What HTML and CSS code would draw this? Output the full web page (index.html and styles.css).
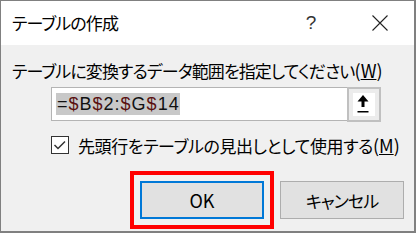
FILE: index.html
```html
<!DOCTYPE html>
<html lang="ja">
<head>
<meta charset="utf-8">
<title>テーブルの作成</title>
<link rel="stylesheet" href="styles.css">
</head>
<body>
<div class="window">
  <div class="titlebar">
    <span class="title jp">テーブルの作成</span>
    <span class="help">?</span>
    <span class="close"><svg width="16" height="16" viewBox="0 0 16 16"><path d="M0.5 0.5 L15.5 15.5 M15.5 0.5 L0.5 15.5" stroke="#222" stroke-width="1.1" fill="none"/></svg></span>
  </div>
  <div class="content">
    <div class="label jp">テーブルに変換するデータ範囲を指定してください<span class="latin">(<u>W</u>)</span></div>
    <div class="range-row">
      <div class="range-input"><span class="sel">=<span class="d">$</span>B<span class="d">$</span>2:<span class="d">$</span>G<span class="d">$</span>14</span></div>
      <div class="collapse-btn"><div class="collapse-inner"><svg width="22" height="23" viewBox="0 0 22 23"><path d="M10 2 L15.5 8.5 L4.5 8.5 Z" fill="#000"/><rect x="8.5" y="8" width="3" height="6" fill="#000"/><rect x="4.5" y="18" width="11" height="1.5" fill="#000"/></svg></div></div>
    </div>
    <div class="check-row">
      <span class="checkbox"><svg width="16" height="16" viewBox="0 0 16 16"><path d="M2.5 8 L6 11.5 L13 4.5" stroke="#333" stroke-width="1.5" fill="none"/></svg></span>
      <span class="check-label jp">先頭行をテーブルの見出しとして使用する<span class="latin">(<u>M</u>)</span></span>
    </div>
    <div class="buttons">
      <div class="btn ok">OK<span class="highlight"></span></div>
      <div class="btn jp">キャンセル</div>
    </div>
  </div>
</div>
</body>
</html>
```

FILE: styles.css
```css
html, body {
  margin: 0;
  padding: 0;
}
body {
  width: 416px;
  height: 233px;
  overflow: hidden;
  font-family: "Noto Sans CJK JP", "Noto Sans", sans-serif;
  color: #000;
}
.jp {
  font-size: 17px;
  letter-spacing: -0.9px;
  font-feature-settings: "palt";
}
.latin {
  letter-spacing: 0;
  font-size: 18px;
}
.window {
  box-sizing: border-box;
  width: 416px;
  height: 233px;
  border: 1px solid #808080;
  border-right-width: 2px;
  border-bottom-width: 2px;
  display: flex;
  flex-direction: column;
  background: #f0f0f0;
}
.titlebar {
  height: 44px;
  flex: none;
  background: #fff;
  display: flex;
  align-items: center;
  padding-left: 11px;
}
.title {
  flex: 1;
  line-height: 24px;
}
.help {
  width: 46px;
  text-align: center;
  font-family: "Liberation Sans", sans-serif;
  font-size: 19px;
  line-height: 24px;
  color: #333;
}
.close {
  width: 46px;
  margin-left: 23px;
  margin-right: 11px;
  display: flex;
  justify-content: center;
}
.content {
  flex: 1;
  padding: 13px 10px 0 11px;
}
.label {
  line-height: 24px;
  white-space: nowrap;
}
.range-row {
  display: flex;
  align-items: flex-start;
  margin: 4px 0 0 39px;
}
.range-input {
  box-sizing: border-box;
  width: 296px;
  height: 34px;
  border: 1px solid #b4b4b4;
  border-right: none;
  background: #fff;
  padding: 3px 0 0 4px;
}
.sel {
  display: inline-block;
  height: 22px;
  line-height: 22px;
  padding: 0 0 0 1px;
  background: #c8c8c8;
  font-family: "Liberation Sans", sans-serif;
  font-size: 18px;
  letter-spacing: 1px;
  color: #111;
}
.d {
  color: #5a1010;
}
.collapse-btn {
  box-sizing: border-box;
  width: 34px;
  height: 35px;
  border: 2px solid #c0c0c0;
  background: #ececec;
  padding: 4px;
}
.collapse-inner {
  width: 22px;
  height: 23px;
  background: #fff;
}
.collapse-inner svg {
  display: block;
}
.check-row {
  display: flex;
  align-items: center;
  height: 24px;
  margin: 11px 0 0 39px;
}
.checkbox {
  box-sizing: border-box;
  width: 18px;
  height: 18px;
  border: 1px solid #333;
  background: #fff;
  display: flex;
  align-items: center;
  justify-content: center;
}
.check-label {
  margin-left: 9px;
  line-height: 24px;
  white-space: nowrap;
  letter-spacing: -0.4px;
}
.buttons {
  display: flex;
  justify-content: flex-end;
  gap: 16px;
  margin-top: 24px;
}
.btn {
  box-sizing: border-box;
  width: 124px;
  height: 38px;
  border: 1px solid #adadad;
  background: #e1e1e1;
  display: flex;
  align-items: center;
  justify-content: center;
}
.ok {
  position: relative;
  border: 2px solid #0078d7;
  font-size: 18px;
}
.highlight {
  position: absolute;
  top: -12px;
  left: -12px;
  right: -12px;
  bottom: -12px;
  border: 4px solid #ff0000;
}
```
